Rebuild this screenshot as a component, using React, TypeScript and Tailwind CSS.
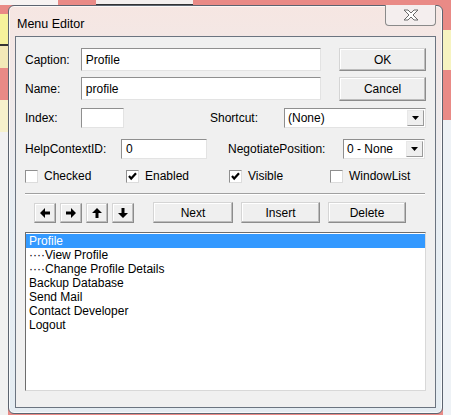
import React from 'react';

const FONT = { fontFamily: '"Liberation Sans", Arial, sans-serif' };

const inputCls =
  'h-full bg-white border border-t-[#8f8f8f] border-l-[#8f8f8f] border-b-[#e3e3e3] border-r-[#e3e3e3] px-[4px] flex items-center text-[12px] text-black';

const btnCls =
  'flex items-center justify-center bg-[#efefef] border border-[#8c8c8c] border-t-[#d5d5d5] border-l-[#d5d5d5] shadow-[inset_-1px_-1px_0_#bdbdbd,inset_1px_1px_0_#ffffff] text-[12px] text-black';

const DropButton: React.FC = () => (
  <div className="w-[17px] h-full flex items-center justify-center bg-[#efefef] border border-[#9a9a9a] border-t-[#e8e8e8] border-l-[#e8e8e8]">
    <svg width="7" height="4" viewBox="0 0 7 4">
      <path d="M0 0h7L3.5 4z" fill="#000" />
    </svg>
  </div>
);

const Select: React.FC<{ value: string; width: string }> = ({ value, width }) => (
  <div className={`${width} h-[20px] bg-white border border-t-[#8f8f8f] border-l-[#8f8f8f] border-b-[#e3e3e3] border-r-[#e3e3e3] flex items-stretch p-[1px]`}>
    <div className="flex-1 flex items-center px-[2px] text-[12px]">{value}</div>
    <DropButton />
  </div>
);

const CheckBox: React.FC<{ label: string; checked?: boolean; width: string }> = ({ label, checked, width }) => (
  <div className={`${width} flex items-center gap-[6px] text-[12px]`}>
    <div className="w-[13px] h-[13px] bg-white border border-[#8f8f8f] border-b-[#dcdcdc] border-r-[#dcdcdc] flex items-center justify-center">
      {checked && (
        <svg width="9" height="9" viewBox="0 0 9 9">
          <path d="M1 4l2.2 2.6L8 1.2" stroke="#000" strokeWidth="2.2" fill="none" />
        </svg>
      )}
    </div>
    <span>{label}</span>
  </div>
);

const Arrow: React.FC<{ dir: 'left' | 'right' | 'up' | 'down' }> = ({ dir }) => {
  const rot = { right: 0, down: 90, left: 180, up: 270 }[dir];
  return (
    <div className={`${btnCls} w-[22px] h-[20px]`}>
      <svg width="10" height="10" viewBox="0 0 10 10" style={{ transform: `rotate(${rot}deg)` }}>
        <path d="M0 3.5h5V0l5 5-5 5V6.5H0z" fill="#000" />
      </svg>
    </div>
  );
};

const ITEMS = ['Profile', '····View Profile', '····Change Profile Details', 'Backup Database', 'Send Mail', 'Contact Developer', 'Logout'];

export default function App() {
  return (
    <div className="relative w-[451px] h-[415px] overflow-hidden bg-[#e98a86]" style={FONT}>
      {/* blurred desktop behind the dialog */}
      <div className="absolute left-0 top-[0px] w-[58px] h-[5px] bg-[#f7f3f2]" />
      <div className="absolute left-[96px] top-[0px] w-[97px] h-[5px] bg-[#f4efee] border-b border-[#333]" />
      <div className="absolute left-0 top-[14px] w-[8px] h-[30px] bg-[#f6f39c]" />
      <div className="absolute left-0 top-[44px] w-[8px] h-[2px] bg-[#333]" />
      <div className="absolute left-0 top-[46px] w-[8px] h-[22px] bg-[#f3e9b8]" />
      <div className="absolute left-0 top-[100px] w-[8px] h-[32px] bg-[#f6f2cc]" />
      <div className="absolute left-0 top-[132px] w-[8px] h-[283px] bg-[#f1f1f1]" />
      <div className="absolute left-[443px] top-[30px] w-[8px] h-[40px] bg-[#f6f3c0]" />
      <div className="absolute left-[443px] top-[120px] w-[8px] h-[295px] bg-[#eef2f6]" />

      {/* window */}
      <div className="absolute left-[8px] top-[5px] w-[435px] h-[409px] rounded-[6px] border border-[#5c6470] bg-gradient-to-b from-[#f6e6e2] via-[#e8eef3] to-[#e4ecf2] shadow-[inset_0_0_0_1px_rgba(255,255,255,0.7)] flex flex-col px-[6px] pb-[5px]">
        <div className="h-[30px] flex items-start relative">
          <span className="mt-[9px] ml-[2px] text-[12.5px] text-black">Menu Editor</span>
          <div className="absolute right-[0px] top-[-1px] w-[51px] h-[21px] rounded-b-[4px] border border-[#8a8a8a] border-t-0 bg-[#f4eeee] flex items-center justify-center">
            <svg width="18" height="12" viewBox="0 0 18 12">
              <path d="M2 1h4l3 3 3-3h4l-5 5 5 5h-4l-3-3-3 3H2l5-5z" fill="#fff" stroke="#6a6a6a" strokeWidth="1" strokeLinejoin="round" />
            </svg>
          </div>
        </div>

        <div className="flex-1 bg-[#f0f0f0] border border-[#6b7480] pl-[9px] pr-[9px] pt-[11px] flex flex-col">
          <div className="flex items-center h-[23px]">
            <span className="w-[56px] text-[12px]">Caption:</span>
            <div className={`${inputCls} w-[241px]`}>Profile</div>
            <div className={`${btnCls} ml-[18px] w-[87px] h-[23px]`}>OK</div>
          </div>
          <div className="flex items-center h-[23px] mt-[6px]">
            <span className="w-[56px] text-[12px]">Name:</span>
            <div className={`${inputCls} w-[241px]`}>profile</div>
            <div className={`${btnCls} ml-[18px] w-[87px] h-[24px]`}>Cancel</div>
          </div>
          <div className="flex items-center h-[20px] mt-[8px]">
            <span className="w-[56px] text-[12px]">Index:</span>
            <div className={`${inputCls} w-[43px]`} />
            <span className="ml-[86px] w-[74px] text-[12px]">Shortcut:</span>
            <Select value="(None)" width="w-[142px]" />
          </div>
          <div className="flex items-center h-[20px] mt-[11px]">
            <span className="w-[96px] text-[12px]">HelpContextID:</span>
            <div className={`${inputCls} w-[86px]`}>0</div>
            <span className="ml-[21px] w-[115px] text-[12px]">NegotiatePosition:</span>
            <Select value="0 - None" width="w-[82px]" />
          </div>
          <div className="flex items-center h-[14px] mt-[10px]">
            <CheckBox label="Checked" width="w-[101px]" />
            <CheckBox label="Enabled" checked width="w-[103px]" />
            <CheckBox label="Visible" checked width="w-[101px]" />
            <CheckBox label="WindowList" width="w-[95px]" />
          </div>
          <div className="mt-[10px] h-[2px] border-t border-[#a0a0a0] border-b border-b-white mr-[1px]" />
          <div className="flex items-center h-[21px] mt-[7px] pl-[9px]">
            <div className="flex gap-[4px]">
              <Arrow dir="left" />
              <Arrow dir="right" />
              <Arrow dir="up" />
              <Arrow dir="down" />
            </div>
            <div className={`${btnCls} ml-[19px] w-[80px] h-[21px]`}>Next</div>
            <div className={`${btnCls} ml-[8px] w-[79px] h-[21px]`}>Insert</div>
            <div className={`${btnCls} ml-[8px] w-[78px] h-[21px]`}>Delete</div>
          </div>
          <div className="mt-[9px] h-[159px] bg-white border border-t-[#6d6d6d] border-l-[#6d6d6d] border-b-[#d8d8d8] border-r-[#d8d8d8] pt-[1px] flex flex-col text-[12px] leading-[14px]">
            {ITEMS.map((it, i) => (
              <div key={i} className={`pl-[3px] h-[14px] ${i === 0 ? 'bg-[#3399ff] text-white' : 'text-black'}`}>
                {it}
              </div>
            ))}
          </div>
        </div>
      </div>
    </div>
  );
}
